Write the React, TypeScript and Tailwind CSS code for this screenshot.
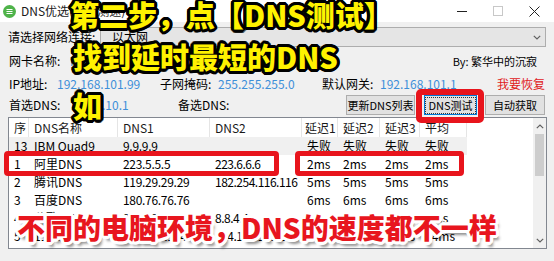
const rows = [
  { id: '13', name: 'IBM Quad9', d1: '9.9.9.9', d2: '', lat: ['失败', '失败', '失败', '失败'], sel: true },
  { id: '1', name: '阿里DNS', d1: '223.5.5.5', d2: '223.6.6.6', lat: ['2ms', '2ms', '2ms', '2ms'] },
  { id: '2', name: '腾讯DNS', d1: '119.29.29.29', d2: '182.254.116.116', lat: ['5ms', '5ms', '5ms', '5ms'] },
  { id: '3', name: '百度DNS', d1: '180.76.76.76', d2: '', lat: ['6ms', '6ms', '6ms', '6ms'] },
  { id: '4', name: '谷歌DNS', d1: '8.8.8.8', d2: '8.8.4.4', lat: ['3ms', '3ms', '3ms', '3ms'] },
  { id: '5', name: '114DNS', d1: '114.114.114.114', d2: '114.114.115.115', lat: ['24ms', '24ms', '24ms', '24ms'] },
  { id: '6', name: 'OpenDNS', d1: '208.67.222.222', d2: '208.67.220.220', lat: ['66ms', '66ms', '66ms', '66ms'] },
];

const cols = [
  { label: '序', w: 'w-[20px] pl-[5px]' },
  { label: 'DNS名称', w: 'w-[89px] pl-[5px]' },
  { label: 'DNS1', w: 'w-[92px] pl-[5px]' },
  { label: 'DNS2', w: 'w-[92px] pl-[5px]' },
  { label: '延迟1', w: 'w-[36px] pl-[3px]' },
  { label: '延迟2', w: 'w-[42px] pl-[5px]' },
  { label: '延迟3', w: 'w-[40px] pl-[5px]' },
  { label: '平均', w: 'w-[47px] pl-[5px]' },
];

const yellowText =
  'text-[#fff200] [text-shadow:3px_0_0_#000,-3px_0_0_#000,0_3px_0_#000,0_-3px_0_#000,2px_2px_0_#000,-2px_2px_0_#000,2px_-2px_0_#000,-2px_-2px_0_#000,3px_1px_0_#000,-3px_1px_0_#000,3px_-1px_0_#000,-3px_-1px_0_#000,1px_3px_0_#000,-1px_3px_0_#000,1px_-3px_0_#000,-1px_-3px_0_#000]';

const redText =
  'text-[#e8161e] [text-shadow:3px_0_0_#fff,-3px_0_0_#fff,0_3px_0_#fff,0_-3px_0_#fff,2px_2px_0_#fff,-2px_2px_0_#fff,2px_-2px_0_#fff,-2px_-2px_0_#fff,3px_1px_0_#fff,-3px_1px_0_#fff,3px_-1px_0_#fff,-3px_-1px_0_#fff,1px_3px_0_#fff,-1px_3px_0_#fff,1px_-3px_0_#fff,-1px_-3px_0_#fff,3px_5px_3px_rgba(0,0,0,0.45)]';

function Chevron({ up }: { up?: boolean }) {
  return (
    <svg width="8" height="5" viewBox="0 0 8 5" className={up ? '' : 'rotate-180'}>
      <path d="M0.8 4.2 L4 1 L7.2 4.2" fill="none" stroke="#606060" strokeWidth="1.2" />
    </svg>
  );
}

export default function App() {
  return (
    <div className="relative w-[554px] h-[261px] overflow-hidden bg-[#f0f0f0] text-[12px] text-black font-['Noto_Sans_CJK_SC','Noto_Sans',sans-serif] leading-none whitespace-nowrap">
      {/* title bar */}
      <div className="h-[22px] bg-white flex items-center">
        <svg width="13" height="13" viewBox="0 0 13 13" className="ml-[3px]">
          <circle cx="6.5" cy="6.5" r="6.5" fill="#4fb34a" />
          <path d="M3.5 4.5h6M3.5 6.5h6M3.5 8.5h6" stroke="#fff" strokeWidth="1" />
        </svg>
        <span className="ml-[5px] text-[12px] text-[#1a1a1a]">DNS优选(DNS测速)</span>
        <div className="ml-auto mr-[2px] flex items-center h-full">
          <div className="w-[36px] h-full flex items-center justify-center">
            <div className="w-[10px] h-px bg-[#222]" />
          </div>
          <div className="w-[36px] h-full flex items-center justify-center">
            <div className="w-[10px] h-[10px] border border-[#c8c8c8]" />
          </div>
          <div className="w-[36px] h-full flex items-center justify-center">
            <svg width="11" height="11" viewBox="0 0 11 11">
              <path d="M0.5 0.5L10.5 10.5M10.5 0.5L0.5 10.5" stroke="#222" strokeWidth="1" />
            </svg>
          </div>
        </div>
      </div>

      {/* connection select */}
      <div className="mt-[5px] h-[20px] flex items-center px-[8px]">
        <span className="w-[92px]">请选择网络连接:</span>
        <div className="flex-1 h-full bg-[#e5e5e5] border border-[#adadad] flex items-center pl-[11px] pr-[4px]">
          <span>以太网</span>
          <span className="ml-auto">
            <Chevron />
          </span>
        </div>
      </div>

      {/* adapter name */}
      <div className="mt-[2px] h-[24px] flex items-center pl-[9px] pr-[17px]">
        <span className="w-[61px]">网卡名称:</span>
        <span className="text-[#3d8fd9]">Realtek PCIe GbE Family</span>
        <span className="ml-auto text-[11px]">By: 繁华中的沉寂</span>
      </div>

      {/* ip info */}
      <div className="h-[22px] flex items-center pl-[9px] pr-[9px]">
        <span className="w-[48px]">IP地址:</span>
        <span className="w-[103px] text-[#3d8fd9]">192.168.101.99</span>
        <span className="w-[58px]">子网掩码:</span>
        <span className="w-[104px] text-[#3d8fd9]">255.255.255.0</span>
        <span className="w-[58px]">默认网关:</span>
        <span className="text-[#3d8fd9]">192.168.101.1</span>
        <span className="ml-auto text-[#e0201b]">我要恢复</span>
      </div>

      {/* dns + buttons */}
      <div className="h-[20px] flex items-center pl-[9px] pr-[9px]">
        <span className="w-[63px]">首选DNS:</span>
        <span className="w-[106px] text-[#3d8fd9]">10.10.10.1</span>
        <span>备选DNS:</span>
        <div className="ml-auto flex items-center h-full text-[11px]">
          <button className="w-[69px] h-full bg-[#e1e1e1] border border-[#adadad] flex items-center justify-center">更新DNS列表</button>
          <button className="ml-[9px] w-[53px] h-full bg-[#e1e1e1] border border-[#0078d7] flex items-center justify-center">
            <span className="border border-dotted border-[#333] px-[2px] py-[2px]">DNS测试</span>
          </button>
          <button className="ml-[8px] w-[60px] h-full bg-[#e1e1e1] border border-[#adadad] flex items-center justify-center">自动获取</button>
        </div>
      </div>

      {/* list */}
      <div className="mt-[2px] ml-[8px] w-[539px] h-[132px] border border-[#828790] bg-white flex overflow-hidden">
        <div className="flex-1 flex flex-col overflow-hidden">
          <div className="h-[19px] flex shrink-0">
            {cols.map((c) => (
              <div key={c.label} className={`${c.w} h-full border-r border-[#e5e5e5] flex items-center text-[#1a1a1a] shrink-0 overflow-hidden`}>
                {c.label}
              </div>
            ))}
          </div>
          {rows.map((r) => (
            <div key={r.id} className="h-[18px] flex items-center shrink-0">
              <div className={`flex items-center h-full ${r.sel ? 'bg-[#f0f0f0]' : ''}`}>
                <span className="w-[20px] pl-[5px] shrink-0">{r.id}</span>
                <span className="w-[89px] pl-[5px] shrink-0">{r.name}</span>
                <span className="w-[92px] pl-[5px] shrink-0 tracking-[-0.3px]">{r.d1}</span>
                <span className="w-[92px] pl-[5px] shrink-0 tracking-[-0.5px]">{r.d2}</span>
                <span className="w-[36px] pl-[5px] shrink-0">{r.lat[0]}</span>
                <span className="w-[42px] pl-[5px] shrink-0">{r.lat[1]}</span>
                <span className="w-[40px] pl-[5px] shrink-0">{r.lat[2]}</span>
                <span className="w-[47px] pl-[5px] shrink-0">{r.lat[3]}</span>
              </div>
            </div>
          ))}
        </div>
        <div className="w-[13px] bg-[#f0f0f0] flex flex-col items-center">
          <div className="h-[16px] flex items-center justify-center">
            <Chevron up />
          </div>
          <div className="w-[9px] h-[42px] bg-[#cdcdcd]" />
          <div className="mt-auto h-[16px] flex items-center justify-center">
            <Chevron />
          </div>
        </div>
      </div>

      {/* annotation overlays */}
      <div className={`absolute left-[70px] top-[0px] text-[29px] font-black ${yellowText}`}>
        第二步，点【DNS测试】
      </div>
      <div className={`absolute left-[73px] top-[42px] text-[29px] font-black ${yellowText}`}>
        找到延时最短的DNS
      </div>
      <div className={`absolute left-[73px] top-[91px] text-[29px] font-black ${yellowText}`}>
        如
      </div>
      <div className={`absolute left-[17px] top-[213px] text-[28px] font-black ${redText}`}>
        不同的电脑环境，DNS的速度都不一样
      </div>

      <div className="absolute left-[4px] top-[151px] w-[275px] h-[25px] border-[5px] border-[#e8141c] rounded-[4px]" />
      <div className="absolute left-[295px] top-[151px] w-[169px] h-[25px] border-[5px] border-[#e8141c] rounded-[4px]" />
      <div className="absolute left-[416px] top-[89px] w-[68px] h-[34px] border-[6px] border-[#e8141c] rounded-[5px]" />
    </div>
  );
}
